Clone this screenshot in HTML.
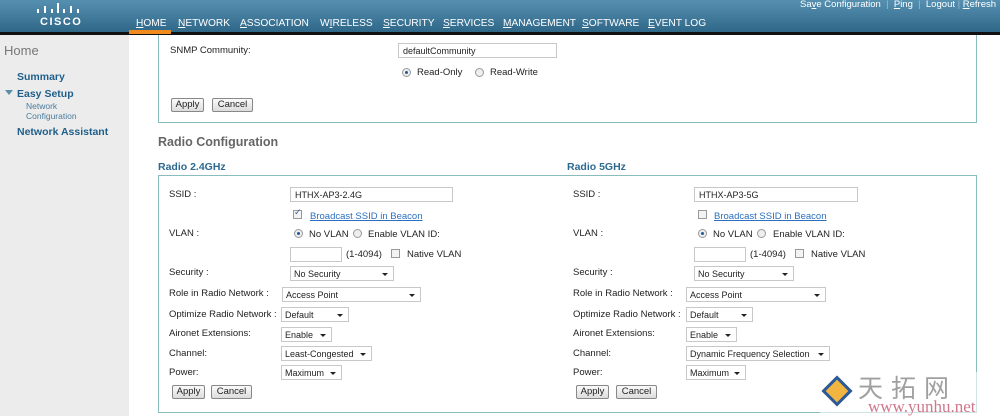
<!DOCTYPE html>
<html><head><meta charset="utf-8"><style>
*{margin:0;padding:0;box-sizing:border-box}
body{width:1000px;height:416px;overflow:hidden;background:#fff;font-family:"Liberation Sans",Arial,sans-serif;font-size:9.5px;color:#222;position:relative}
.a{position:absolute;white-space:nowrap}
#hdr{position:absolute;left:0;top:0;width:1000px;height:32px;background:linear-gradient(#5690b1,#2f6788)}
#hl{position:absolute;left:0;top:32px;width:1000px;height:3px;background:#111}
.nav{position:absolute;top:18px;color:#fff;font-size:10.2px}
.nav u{text-decoration:underline}
#side{position:absolute;left:0;top:35px;width:129px;height:381px;background:#ececec}
.sb{color:#1f5f8a;font-weight:bold;font-size:10.5px}
.inp{position:absolute;border:1px solid #c8c8c8;background:#fff;height:15px;padding:1px 4px;font-size:9px;line-height:12px}
.sel{position:absolute;border:1px solid #c8c8c8;background:#fff;height:15px;padding:1px 3px;font-size:9px;line-height:12px}
.sel:after{content:"";position:absolute;right:5px;top:6px;border:3px solid transparent;border-top:3px solid #222}
.btn{position:absolute;border:1px solid #888;background:linear-gradient(#fafafa,#dcdcdc);height:14px;font-size:9.5px;line-height:11px;text-align:center;border-radius:2px}
.rad{position:absolute;width:9px;height:9px;border-radius:50%;border:1px solid #999;background:#eee}
.rad.on:after{content:"";position:absolute;left:2px;top:2px;width:3px;height:3px;border-radius:50%;background:#1e5a9a}
.cb{position:absolute;width:9px;height:9px;border:1px solid #999;background:#f3f3f3}
.lnk{color:#2a6fc0;text-decoration:underline}
</style></head><body>
<div id="hdr"></div><div id="hl"></div>
<div class="a" style="left:129px;top:30px;width:42px;height:4px;background:#f08a1c"></div>
<svg class="a" style="left:36px;top:3px" width="52" height="12"><g fill="#fff"><rect x="1" y="6" width="2" height="4"/><rect x="8" y="3" width="2" height="7"/><rect x="15" y="6" width="2" height="4"/><rect x="21" y="0" width="2" height="10"/><rect x="27" y="6" width="2" height="4"/><rect x="34" y="3" width="2" height="7"/><rect x="41" y="6" width="2" height="4"/></g></svg>
<div class="a" style="left:40px;top:16px;color:#fff;font-weight:bold;font-size:11px;letter-spacing:1.5px">CISCO</div>
<div class="nav" style="left:136px"><u>H</u>OME</div>
<div class="nav" style="left:178px"><u>N</u>ETWORK</div>
<div class="nav" style="left:240px"><u>A</u>SSOCIATION</div>
<div class="nav" style="left:320px">W<u>I</u>RELESS</div>
<div class="nav" style="left:383px"><u>S</u>ECURITY</div>
<div class="nav" style="left:443px"><u>S</u>ERVICES</div>
<div class="nav" style="left:503px"><u>M</u>ANAGEMENT</div>
<div class="nav" style="left:582px"><u>S</u>OFTWARE</div>
<div class="nav" style="left:648px"><u>E</u>VENT LOG</div>
<div class="a" style="left:800px;top:-1px;color:#fff;font-size:9.5px">Sa<u>v</u>e Configuration &nbsp;<span style="color:#9bbbd0">|</span>&nbsp; <u>P</u>ing &nbsp;<span style="color:#9bbbd0">|</span>&nbsp; Lo<u>g</u>out <span style="color:#9bbbd0">|</span> <u>R</u>efresh</div>
<div id="side"></div>
<div class="a" style="left:4px;top:43px;font-size:13px;color:#777">Home</div>
<div class="a sb" style="left:17px;top:71px">Summary</div>
<div class="a" style="left:5px;top:90px;border:4px solid transparent;border-top:5px solid #5a8fa8"></div>
<div class="a sb" style="left:17px;top:88px">Easy Setup</div>
<div class="a" style="left:26px;top:101px;color:#4a7c9c;font-size:8.5px">Network</div>
<div class="a" style="left:26px;top:111px;color:#4a7c9c;font-size:8.5px">Configuration</div>
<div class="a sb" style="left:17px;top:126px">Network Assistant</div>
<div class="a" style="left:158px;top:35px;width:819px;height:88px;border:1px solid #8bbcbc;border-top:none"></div>
<div class="a" style="left:170px;top:45px">SNMP Community:</div>
<div class="inp" style="left:398px;top:43px;width:159px">defaultCommunity</div>
<div class="rad on" style="left:402px;top:68px"></div><div class="a" style="left:417px;top:67px">Read-Only</div>
<div class="rad" style="left:475px;top:68px"></div><div class="a" style="left:490px;top:67px">Read-Write</div>
<div class="btn" style="left:171px;top:98px;width:33px">Apply</div>
<div class="btn" style="left:212px;top:98px;width:41px">Cancel</div>
<div class="a" style="left:158px;top:135px;font-size:12.5px;font-weight:bold;color:#666">Radio Configuration</div>
<div class="a" style="left:158px;top:161px;font-size:10.5px;font-weight:bold;color:#2c6a92">Radio 2.4GHz</div>
<div class="a" style="left:567px;top:161px;font-size:10.5px;font-weight:bold;color:#2c6a92">Radio 5GHz</div>
<div class="a" style="left:158px;top:175px;width:819px;height:238px;border:1px solid #8bbcbc"></div>

<div class="a" style="left:169px;top:189px">SSID :</div>
<div class="inp" style="left:290px;top:187px;width:163px">HTHX-AP3-2.4G</div>
<div class="cb" style="left:293px;top:210px"></div><div class="a" style="left:294px;top:207px;color:#3a5fa0;font-size:9px">✓</div>
<div class="a lnk" style="left:310px;top:211px">Broadcast SSID in Beacon</div>
<div class="a" style="left:169px;top:228px">VLAN :</div>
<div class="rad on" style="left:294px;top:229px"></div><div class="a" style="left:309px;top:229px">No VLAN</div>
<div class="rad" style="left:353px;top:229px"></div><div class="a" style="left:368px;top:229px">Enable VLAN ID:</div>
<div class="inp" style="left:290px;top:247px;width:52px"></div>
<div class="a" style="left:346px;top:249px">(1-4094)</div>
<div class="cb" style="left:391px;top:249px"></div><div class="a" style="left:407px;top:249px">Native VLAN</div>
<div class="a" style="left:169px;top:267px">Security :</div>
<div class="sel" style="left:290px;top:266px;width:104px">No Security</div>
<div class="a" style="left:169px;top:288px">Role in Radio Network :</div>
<div class="sel" style="left:282px;top:287px;width:139px">Access Point</div>
<div class="a" style="left:169px;top:309px">Optimize Radio Network :</div>
<div class="sel" style="left:281px;top:307px;width:68px">Default</div>
<div class="a" style="left:169px;top:328px">Aironet Extensions:</div>
<div class="sel" style="left:281px;top:327px;width:51px">Enable</div>
<div class="a" style="left:169px;top:348px">Channel:</div>
<div class="sel" style="left:281px;top:346px;width:91px">Least-Congested</div>
<div class="a" style="left:169px;top:367px">Power:</div>
<div class="sel" style="left:281px;top:365px;width:61px">Maximum</div>
<div class="btn" style="left:172px;top:385px;width:33px">Apply</div>
<div class="btn" style="left:211px;top:385px;width:41px">Cancel</div>

<div class="a" style="left:573px;top:189px">SSID :</div>
<div class="inp" style="left:694px;top:187px;width:164px">HTHX-AP3-5G</div>
<div class="cb" style="left:698px;top:210px"></div>
<div class="a lnk" style="left:714px;top:211px">Broadcast SSID in Beacon</div>
<div class="a" style="left:573px;top:228px">VLAN :</div>
<div class="rad on" style="left:698px;top:229px"></div><div class="a" style="left:713px;top:229px">No VLAN</div>
<div class="rad" style="left:757px;top:229px"></div><div class="a" style="left:773px;top:229px">Enable VLAN ID:</div>
<div class="inp" style="left:694px;top:247px;width:52px"></div>
<div class="a" style="left:750px;top:249px">(1-4094)</div>
<div class="cb" style="left:795px;top:249px"></div><div class="a" style="left:811px;top:249px">Native VLAN</div>
<div class="a" style="left:573px;top:267px">Security :</div>
<div class="sel" style="left:694px;top:266px;width:100px">No Security</div>
<div class="a" style="left:573px;top:288px">Role in Radio Network :</div>
<div class="sel" style="left:686px;top:287px;width:140px">Access Point</div>
<div class="a" style="left:573px;top:309px">Optimize Radio Network :</div>
<div class="sel" style="left:686px;top:307px;width:67px">Default</div>
<div class="a" style="left:573px;top:328px">Aironet Extensions:</div>
<div class="sel" style="left:686px;top:327px;width:51px">Enable</div>
<div class="a" style="left:573px;top:348px">Channel:</div>
<div class="sel" style="left:686px;top:346px;width:144px">Dynamic Frequency Selection</div>
<div class="a" style="left:573px;top:367px">Power:</div>
<div class="sel" style="left:686px;top:365px;width:60px">Maximum</div>
<div class="btn" style="left:576px;top:385px;width:33px">Apply</div>
<div class="btn" style="left:616px;top:385px;width:41px">Cancel</div>

<div class="a" style="left:820px;top:372px;width:180px;height:44px;background:rgba(255,255,255,.6)"></div>
<div class="a" style="left:826px;top:380px;width:22px;height:22px;transform:rotate(45deg);border:3px solid #2a5a9a;background:#f2b540"></div>
<div class="a" style="left:858px;top:372px;font-size:25px;color:#888;font-family:'Noto Sans CJK SC',sans-serif;letter-spacing:8px;line-height:30px;opacity:.8">天拓网</div>
<div class="a" style="left:868px;top:397px;font-size:17px;color:#c8607a;font-family:'Liberation Serif',serif;opacity:.85">www.yunhu.net</div>
</body></html>
